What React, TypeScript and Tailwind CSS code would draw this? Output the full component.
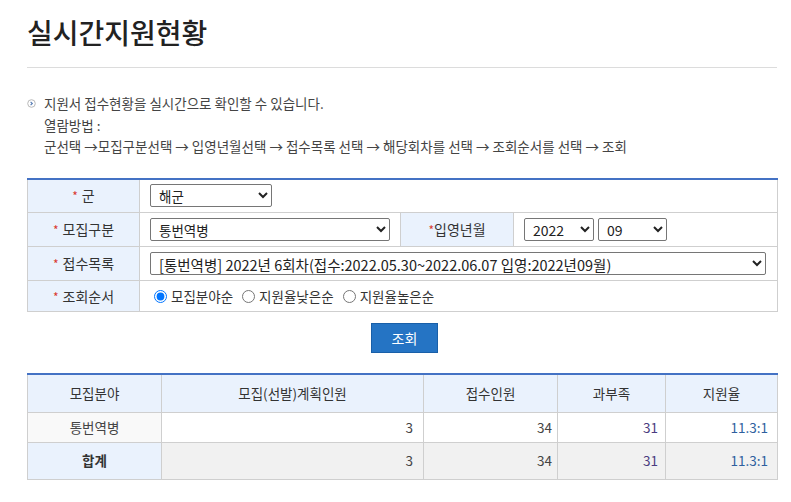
import React from 'react';

const font = { fontFamily: '"Noto Sans CJK KR", "Noto Sans", sans-serif' };

function Star({ tight }: { tight?: boolean }) {
  return <span className={`text-[#d9392f] text-[12px] ${tight ? '' : 'mr-[4px]'}`}>*</span>;
}

function Bullet() {
  return (
    <svg width="9" height="9" viewBox="0 0 9 9" className="mt-[6px] shrink-0">
      <circle cx="4.5" cy="4.5" r="3.8" fill="#fff" stroke="#b8b8b8" strokeWidth="1" />
      <path d="M3.6 2.8 L5.3 4.5 L3.6 6.2" fill="none" stroke="#5a7fb5" strokeWidth="1.2" />
    </svg>
  );
}

const selectCls =
  'h-[23px] border border-[#767676] rounded-[2px] bg-white text-[#222] pl-[4px] pr-[2px]';

export default function App() {
  const labelCell = 'bg-[#eaf2fd] border border-[#cfcfcf] text-center text-[14px] text-[#333] font-normal';
  const cell = 'border border-[#cfcfcf] px-[10px] text-[13.5px] text-[#333]';
  const th = 'border border-[#cfcfcf] font-normal text-[#333]';
  const td = 'border border-[#cfcfcf]';

  return (
    <div className="w-[791px] min-h-[502px] bg-white text-[#333]" style={font}>
      <div className="ml-[27px] w-[750px]">
        <h1 className="pt-[13px] pb-[16px] text-[28px] leading-[38px] font-medium text-[#222] border-b border-[#dcdcdc]">
          실시간지원현황
        </h1>

        <div className="mt-[25px] flex gap-[8px] text-[13.5px] leading-[21.5px] text-[#444]">
          <Bullet />
          <div>
            <p>지원서 접수현황을 실시간으로 확인할 수 있습니다.</p>
            <p>열람방법 :</p>
            <p>군선택 →모집구분선택 → 입영년월선택 → 접수목록 선택 → 해당회차를 선택 → 조회순서를 선택 → 조회</p>
          </div>
        </div>

        <table className="mt-[20px] w-[750px] border-collapse border-t-2 border-t-[#4472c4] table-fixed">
          <colgroup>
            <col className="w-[112px]" />
            <col className="w-[261px]" />
            <col className="w-[113px]" />
            <col className="w-[264px]" />
          </colgroup>
          <tbody>
            <tr className="h-[34px]">
              <th className={labelCell}>
                <Star />군
              </th>
              <td className={cell} colSpan={3}>
                <select className={`${selectCls} text-[13.5px] w-[122px]`} defaultValue="해군">
                  <option>해군</option>
                </select>
              </td>
            </tr>
            <tr className="h-[34px]">
              <th className={labelCell}>
                <Star />모집구분
              </th>
              <td className={cell}>
                <select className={`${selectCls} text-[13.5px] w-[240px]`} defaultValue="통번역병">
                  <option>통번역병</option>
                </select>
              </td>
              <th className={labelCell}>
                <Star tight />입영년월
              </th>
              <td className={cell}>
                <div className="flex gap-[4px]">
                  <select className={`${selectCls} text-[14px] w-[70px]`} defaultValue="2022">
                    <option>2022</option>
                  </select>
                  <select className={`${selectCls} text-[14px] w-[69px]`} defaultValue="09">
                    <option>09</option>
                  </select>
                </div>
              </td>
            </tr>
            <tr className="h-[34px]">
              <th className={labelCell}>
                <Star />접수목록
              </th>
              <td className={cell} colSpan={3}>
                <select className={`${selectCls} text-[14.5px] w-[616px]`}>
                  <option>[통번역병] 2022년 6회차(접수:2022.05.30~2022.06.07 입영:2022년09월)</option>
                </select>
              </td>
            </tr>
            <tr className="h-[31px]">
              <th className={labelCell}>
                <Star />조회순서
              </th>
              <td className={`${cell} pl-[14px]`} colSpan={3}>
                <div className="flex items-center gap-[9px]">
                  <label className="flex items-center gap-[4px]">
                    <input type="radio" name="order" defaultChecked className="m-0 w-[13px] h-[13px]" />
                    모집분야순
                  </label>
                  <label className="flex items-center gap-[4px]">
                    <input type="radio" name="order" className="m-0 w-[13px] h-[13px]" />
                    지원율낮은순
                  </label>
                  <label className="flex items-center gap-[4px]">
                    <input type="radio" name="order" className="m-0 w-[13px] h-[13px]" />
                    지원율높은순
                  </label>
                </div>
              </td>
            </tr>
          </tbody>
        </table>

        <div className="flex justify-center mt-[11px] pl-[5px]">
          <button className="w-[67px] h-[30px] bg-[#2574c4] border border-[#195fa8] text-white text-[14px]">
            조회
          </button>
        </div>

        <table className="mt-[20px] w-[750px] border-collapse border-t-2 border-t-[#4472c4] table-fixed text-[13.5px]">
          <colgroup>
            <col className="w-[134px]" />
            <col className="w-[262px]" />
            <col className="w-[134px]" />
            <col className="w-[108px]" />
            <col className="w-[112px]" />
          </colgroup>
          <thead>
            <tr className="h-[38px] bg-[#eaf2fd]">
              <th className={th}>모집분야</th>
              <th className={th}>모집(선발)계획인원</th>
              <th className={th}>접수인원</th>
              <th className={th}>과부족</th>
              <th className={th}>지원율</th>
            </tr>
          </thead>
          <tbody>
            <tr className="h-[30px]">
              <td className={`${td} bg-[#f9f9f9] text-center text-[#444]`}>통번역병</td>
              <td className={`${td} text-right pr-[10px] text-[#444]`}>3</td>
              <td className={`${td} text-right pr-[5px] text-[#444]`}>34</td>
              <td className={`${td} text-right pr-[7px] text-[#4a3c80]`}>31</td>
              <td className={`${td} text-right pr-[9px] text-[#2e5f9e]`}>11.3:1</td>
            </tr>
            <tr className="h-[37px]">
              <td className={`${td} bg-[#eaf2fd] text-center font-bold text-[#333]`}>합계</td>
              <td className={`${td} bg-[#f1f1f1] text-right pr-[10px] text-[#444]`}>3</td>
              <td className={`${td} bg-[#f1f1f1] text-right pr-[5px] text-[#444]`}>34</td>
              <td className={`${td} bg-[#f1f1f1] text-right pr-[7px] text-[#4a3c80]`}>31</td>
              <td className={`${td} bg-[#f1f1f1] text-right pr-[9px] text-[#2e5f9e]`}>11.3:1</td>
            </tr>
          </tbody>
        </table>
      </div>
    </div>
  );
}
